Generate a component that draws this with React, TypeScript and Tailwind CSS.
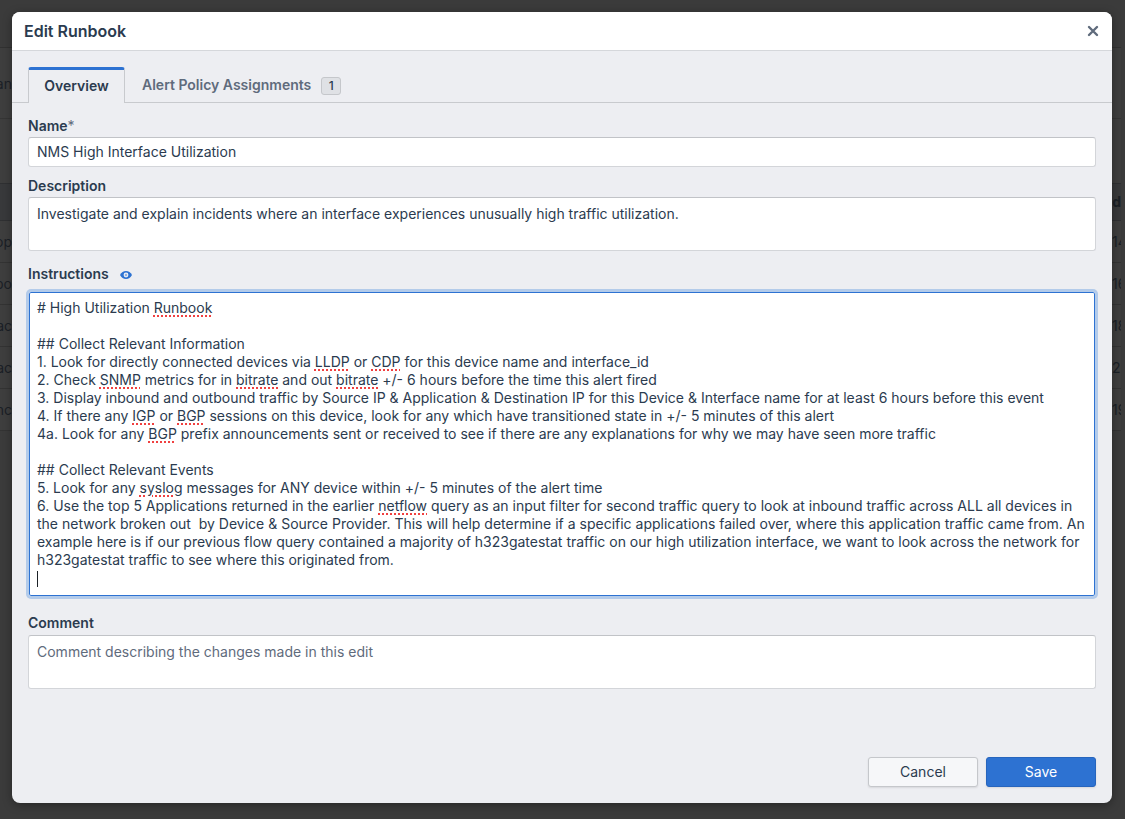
import { Fragment, useState } from "react";

const INSTRUCTIONS = `# High Utilization Runbook

## Collect Relevant Information
1. Look for directly connected devices via LLDP or CDP for this device name and interface_id
2. Check SNMP metrics for in bitrate and out bitrate +/- 6 hours before the time this alert fired
3. Display inbound and outbound traffic by Source IP & Application & Destination IP for this Device & Interface name for at least 6 hours before this event
4. If there any IGP or BGP sessions on this device, look for any which have transitioned state in +/- 5 minutes of this alert
4a. Look for any BGP prefix announcements sent or received to see if there are any explanations for why we may have seen more traffic

## Collect Relevant Events
5. Look for any syslog messages for ANY device within +/- 5 minutes of the alert time
6. Use the top 5 Applications returned in the earlier netflow query as an input filter for second traffic query to look at inbound traffic across ALL all devices in the network broken out  by Device & Source Provider. This will help determine if a specific applications failed over, where this application traffic came from. An example here is if our previous flow query contained a majority of h323gatestat traffic on our high utilization interface, we want to look across the network for h323gatestat traffic to see where this originated from.
`;

const MISSPELLED = /\b(Runbook|LLDP|CDP|SNMP|bitrate|IGP|BGP|syslog|netflow)\b/g;

const ROWS = [
  { name: "op", count: "14" },
  { name: "nbo", count: "16" },
  { name: "ac", count: "18" },
  { name: "ac", count: "20" },
  { name: "nc", count: "19" },
];

const label = "text-sm leading-[18px] font-semibold text-[#2b3b4f]";
const box =
  "block w-full rounded-[3px] border border-[#d3d5d9] border-t-[#c1c3c7] bg-white px-2 text-sm leading-[18px] text-[#2b3b4f] outline-none";
const area = `${box} h-[54px] resize-none py-[7px] placeholder:text-[#5f6b7c]`;
const button = "h-[30px] w-[110px] rounded-[3px] border text-sm shadow-[0_1px_2px_rgba(17,20,24,0.1)]";

function PageBehind() {
  return (
    <div aria-hidden="true" className="col-start-1 row-start-1 overflow-hidden bg-[#3b3b3b] pr-1 text-sm text-[#1b2026]">
      <div className="h-12 border-b border-[#313131]" />
      <div className="flex h-[71px] items-center border-b border-[#353535] bg-[#3e3e3e] pt-0.5">
        <div className="flex w-3 justify-end">an</div>
      </div>
      <div className="h-16 bg-[#3e3e3e]" />
      <table className="w-full table-fixed border-collapse">
        <thead>
          <tr className="h-[37px] border-y border-[#2f3032] bg-[#38393b]">
            <th />
            <th className="w-[9px] overflow-hidden p-0 font-bold">
              <div className="flex justify-end">ed</div>
            </th>
          </tr>
        </thead>
        <tbody>
          {ROWS.map((r, i) => (
            <tr key={i} className="h-[42px] border-b border-[#333333] bg-[#3e3e3e]">
              <td className="p-0">
                <div className="flex w-3 justify-end">{r.name}</div>
              </td>
              <td className="overflow-hidden p-0">{r.count}</td>
            </tr>
          ))}
        </tbody>
      </table>
    </div>
  );
}

function InstructionsEditor() {
  const [value, setValue] = useState(INSTRUCTIONS);
  const text =
    "col-start-1 row-start-1 pt-[7px] pr-0 pb-[9px] pl-2 text-sm leading-[18px] whitespace-pre-wrap break-words";
  return (
    <div className="mb-[17px] grid rounded-[3px] border border-[#b3cbea] bg-white shadow-[inset_0_0_0_1px_#2d72d2,0_0_0_2px_#b3cbea]">
      {/* spelling marks sit under the transparent textarea */}
      <div aria-hidden="true" className={`${text} invisible`}>
        {value.split(MISSPELLED).map((part, i) =>
          i % 2 ? (
            <span
              key={i}
              className="visible text-transparent underline decoration-[#f04040] decoration-dotted decoration-2 underline-offset-2"
            >
              {part}
            </span>
          ) : (
            <Fragment key={i}>{part}</Fragment>
          ),
        )}
        <span className="visible inline-block h-4 w-px bg-[#1c2127] align-middle" />
      </div>
      <textarea
        id="instructions"
        className={`${text} resize-none overflow-hidden bg-transparent text-[#2b3b4f] caret-transparent outline-none`}
        spellCheck={false}
        value={value}
        onChange={(e) => setValue(e.target.value)}
      />
    </div>
  );
}

export default function App() {
  return (
    <div className="grid min-h-screen font-['Inter','Liberation_Sans',sans-serif]">
      <PageBehind />
      <div
        role="dialog"
        aria-labelledby="dialog-title"
        className="z-10 col-start-1 row-start-1 mt-3 mr-[13px] mb-4 ml-3 flex flex-col overflow-hidden rounded-lg bg-[#edeef2] shadow-[0_2px_10px_rgba(0,0,0,0.35)]"
      >
        <header className="flex h-[39px] items-center justify-between border-b border-[#d5d7db] bg-white px-3">
          <h2 id="dialog-title" className="text-base font-semibold text-[#2b3b4f]">
            Edit Runbook
          </h2>
          <button type="button" aria-label="Close" className="flex h-6 w-[14px] items-center justify-center">
            <svg width="14" height="14" viewBox="0 0 14 14" fill="none" stroke="#5f6b7c" strokeWidth="2.4" strokeLinecap="round">
              <path d="M3 3l8 8M11 3l-8 8" />
            </svg>
          </button>
        </header>

        <div role="tablist" className="flex h-[52px] pt-4 text-sm font-semibold">
          <div className="w-4 border-b border-[#c8cace]" />
          <button
            type="button"
            role="tab"
            aria-selected="true"
            className="w-[97px] rounded-t-[3px] border-x border-t-3 border-x-[#c8cace] border-t-[#2d72d2] pb-0.5 text-[#2b3b4f]"
          >
            Overview
          </button>
          <button
            type="button"
            role="tab"
            aria-selected="false"
            className="flex grow items-center gap-[10px] border-b border-[#c8cace] pl-[17px] text-[#5f6b7c]"
          >
            Alert Policy Assignments
            <span className="mt-0.5 flex h-[18px] w-5 items-center justify-center rounded-[3px] border border-[#c5c7cb] bg-[#dfe1e5] text-xs font-medium text-[#2b3b4f]">
              1
            </span>
          </button>
        </div>

        <form className="flex grow flex-col px-4 pt-[14px] pb-4" onSubmit={(e) => e.preventDefault()}>
          <label htmlFor="name" className={`${label} mb-0.5`}>
            Name<span className="font-normal text-[#5f6b7c]">*</span>
          </label>
          <input id="name" className={`${box} mb-[10px] h-[30px] pb-0.5`} defaultValue="NMS High Interface Utilization" />

          <label htmlFor="description" className={`${label} mb-0.5`}>
            Description
          </label>
          <textarea
            id="description"
            className={`${area} mb-[10px]`}
            spellCheck={false}
            defaultValue="Investigate and explain incidents where an interface experiences unusually high traffic utilization."
          />

          <div className="mb-1 flex h-[26px] items-center gap-[11px]">
            <label htmlFor="instructions" className={label}>
              Instructions
            </label>
            <button type="button" aria-label="Preview" className="pt-0.5">
              <svg width="12" height="12" viewBox="0 0 12 12" className="block">
                <path d="M0 6C1.4 3.6 3.5 2 6 2s4.6 1.6 6 4c-1.4 2.4-3.5 4-6 4S1.4 8.4 0 6z" fill="#2d72d2" />
                <circle cx="6" cy="6" r="2.4" fill="#edeef2" />
                <circle cx="6" cy="6" r="1.2" fill="#8fb3e6" />
              </svg>
            </button>
          </div>
          <InstructionsEditor />

          <label htmlFor="comment" className={`${label} mb-[3px]`}>
            Comment
          </label>
          <textarea id="comment" className={area} placeholder="Comment describing the changes made in this edit" />

          <div className="mt-auto flex justify-end gap-2 pt-4">
            <button type="button" className={`${button} border-[#c5c7cb] bg-[#f6f7f9] text-[#2b3b4f]`}>
              Cancel
            </button>
            <button type="submit" className={`${button} border-[#2765bd] bg-[#2d72d2] text-white`}>
              Save
            </button>
          </div>
        </form>
      </div>
    </div>
  );
}
